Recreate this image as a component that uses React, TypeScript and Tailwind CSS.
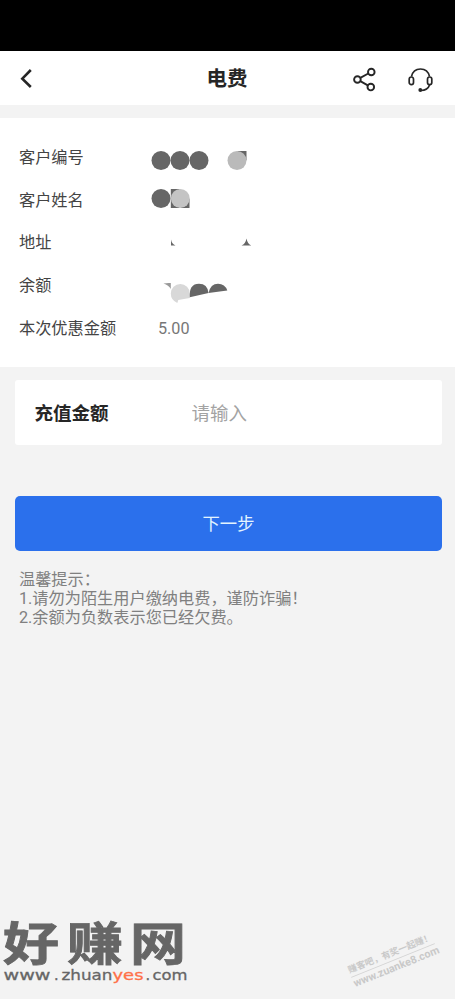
import type { ReactNode } from "react";

type Row = {
  label: string;
  value: ReactNode;
};

function Mask({ children }: { children: ReactNode }) {
  return (
    <svg width="120" height="43" viewBox="0 0 120 43" className="block">
      {children}
    </svg>
  );
}

const rows: Row[] = [
  {
    label: "客户编号",
    value: (
      <Mask>
        <g fill="#666">
          <circle cx="11" cy="24.500" r="9.5" />
          <circle cx="30" cy="24.500" r="9.5" />
          <circle cx="49" cy="24.500" r="9.5" />
          <path d="M87 15h9.5v9.500z" />
        </g>
        <circle cx="87" cy="24.500" r="9.5" fill="#bababa" />
      </Mask>
    ),
  },
  {
    label: "客户姓名",
    value: (
      <Mask>
        <circle cx="11" cy="19.500" r="9.5" fill="#666" />
        <path d="M20.8 10H30l-9.200 9.500zM39.5 19.500V29H30zM20.8 19.500V29H30z" fill="#666" />
        <circle cx="30.3" cy="19.500" r="9.4" fill="#c4c4c4" />
      </Mask>
    ),
  },
  {
    label: "地址",
    value: (
      <Mask>
        <path d="M21 17.5q.8 4.5 4.5 6H21zM96.500 16.500q1 5.500 4.800 7H91.500q4-1.500 5-7z" fill="#666" />
      </Mask>
    ),
  },
  {
    label: "余额",
    value: (
      <Mask>
        <path d="M13.500 18.500q3.500-.8 7.300-.5v6q-2-4-7.300-5.500z" fill="#999" />
        <path d="M20.800 28.500a9.500 9.500 0 0 1 19 0v4.500l-11.500 2-1 3q-6.500-3-6.500-9.500z" fill="#d8d8d8" />
        <path d="M39.800 32.300q-1-13.500 9.200-13.500 8.500 0 9.500 9.300z" fill="#666" />
        <path d="M58.500 28.100q2-9.300 9.500-9.300 7 0 9.300 6.800z" fill="#666" />
      </Mask>
    ),
  },
  {
    label: "本次优惠金额",
    value: <span className="pl-2 text-[#777]">5.00</span>,
  },
];

function Header() {
  return (
    <header className="flex h-[54px] shrink-0 items-center bg-white text-[#262626]">
      <div className="flex-1 pl-5">
        <svg width="13" height="22" viewBox="0 0 13 22" fill="none" stroke="currentColor" strokeWidth="2.6">
          <path d="M10.800 3 2.300 11.700l8.500 8.300" />
        </svg>
      </div>
      <h1 className="pt-[3px] text-[20.500px] font-bold leading-none">电费</h1>
      <div className="flex flex-1 items-center justify-end pr-[21px]">
        <svg width="24" height="28" viewBox="0 0 24 28" fill="none" stroke="currentColor" strokeWidth="1.900" className="mr-[31px]">
          <circle cx="4.400" cy="15.500" r="3.300" />
          <circle cx="18.300" cy="8" r="3.300" />
          <circle cx="17.800" cy="23.100" r="3.300" />
          <path d="m7.300 13.800 8-4.300M7.300 17.100l7.500 4.200" />
        </svg>
        <svg width="26" height="28" viewBox="0 0 26 28" fill="none" stroke="currentColor" strokeWidth="1.700">
          <path d="M3.500 12.500C4.500 8 8 5 12.500 5s8 3 9 7.500M21.800 20.500c-1.300 3.800-4.800 6-9 6" />
          <rect x="1.200" y="13" width="4.300" height="7.600" rx="2.150" />
          <rect x="19.500" y="13" width="4.300" height="7.600" rx="2.150" />
          <circle cx="12.300" cy="26" r="1.900" fill="currentColor" stroke="none" />
        </svg>
      </div>
    </header>
  );
}

function SiteLogo() {
  return (
    <div className="absolute bottom-[13px] left-0 w-[192px] text-[#666]">
      <div className="flex h-[49px] origin-top scale-y-[.82] gap-[9px] pl-[3px] text-[56px] font-bold leading-[49px] [-webkit-text-stroke:1px_#666]">
        <span className="w-[55px]">好</span>
        <span className="w-[54px]">赚</span>
        <span className="w-[56px]">网</span>
      </div>
      <svg width="192" height="16" viewBox="0 0 192 16" className="-mt-[4px] block overflow-visible">
        <g
          fill="#666"
          stroke="#666"
          strokeWidth=".3"
          fontFamily="'DejaVu Sans', sans-serif"
          fontSize="14.500"
        >
          <text x="3.500" y="10" textLength="47" lengthAdjust="spacingAndGlyphs">www</text>
          <text x="54" y="10">.</text>
          <text x="61.500" y="10" textLength="51" lengthAdjust="spacingAndGlyphs">zhuan</text>
          <text x="112.500" y="10" textLength="31" lengthAdjust="spacingAndGlyphs" fill="#ff7048" stroke="#ff7048">yes</text>
          <text x="145.500" y="10">.</text>
          <text x="152.500" y="10" textLength="35" lengthAdjust="spacingAndGlyphs">com</text>
        </g>
      </svg>
    </div>
  );
}

function ForumMark() {
  return (
    <div className="absolute bottom-[25px] right-[17px] w-[90px] -rotate-[22deg] font-bold text-[#c9c9c9]">
      <p className="whitespace-nowrap border-b border-[#d4d4d4] text-[9px] leading-[13px]">赚客吧，有奖一起赚！</p>
      <p className="whitespace-nowrap text-[10.800px] leading-[13px]">www.zuanke8.com</p>
    </div>
  );
}

export default function App() {
  return (
    <div className="relative flex h-[999px] w-full flex-col overflow-hidden bg-[#f3f3f3] font-['Roboto','Noto_Sans_CJK_SC',sans-serif]">
      <div className="h-[50.500px] shrink-0 bg-black" />
      <Header />

      {/* Customer details */}
      <section className="mt-[13px] h-[249px] shrink-0 border-t border-transparent bg-white pt-[18px]">
        {rows.map((row) => (
          <div key={row.label} className="flex h-[42.750px] items-center pl-[19px] text-[16.200px] leading-none">
            <span className="w-[131px] text-[#444]">{row.label}</span>
            {row.value}
          </div>
        ))}
      </section>

      {/* Amount to top up */}
      <label className="mx-[15px] mr-[13px] mt-[13px] flex h-[65px] shrink-0 items-center rounded-[3px] bg-white pl-[19.500px] pt-[5px] text-[18.500px]">
        <span className="w-[157px] font-bold text-[#262626]">充值金额</span>
        <input placeholder="请输入" className="w-40 bg-transparent outline-none placeholder:text-[#a3a3a3]" />
      </label>

      <button className="ml-[15px] mr-[13px] mt-[51px] h-[55px] shrink-0 rounded-[5px] bg-[#2b70ec] pt-[3px] text-[17.300px] text-[#e3f4ff]">
        下一步
      </button>

      <div className="mt-[19.500px] pl-[19px] text-[16.200px] leading-[19px] text-[#808080]">
        <p>温馨提示：</p>
        <p>1.请勿为陌生用户缴纳电费，谨防诈骗！</p>
        <p>2.余额为负数表示您已经欠费。</p>
      </div>

      <SiteLogo />
      <ForumMark />
    </div>
  );
}
